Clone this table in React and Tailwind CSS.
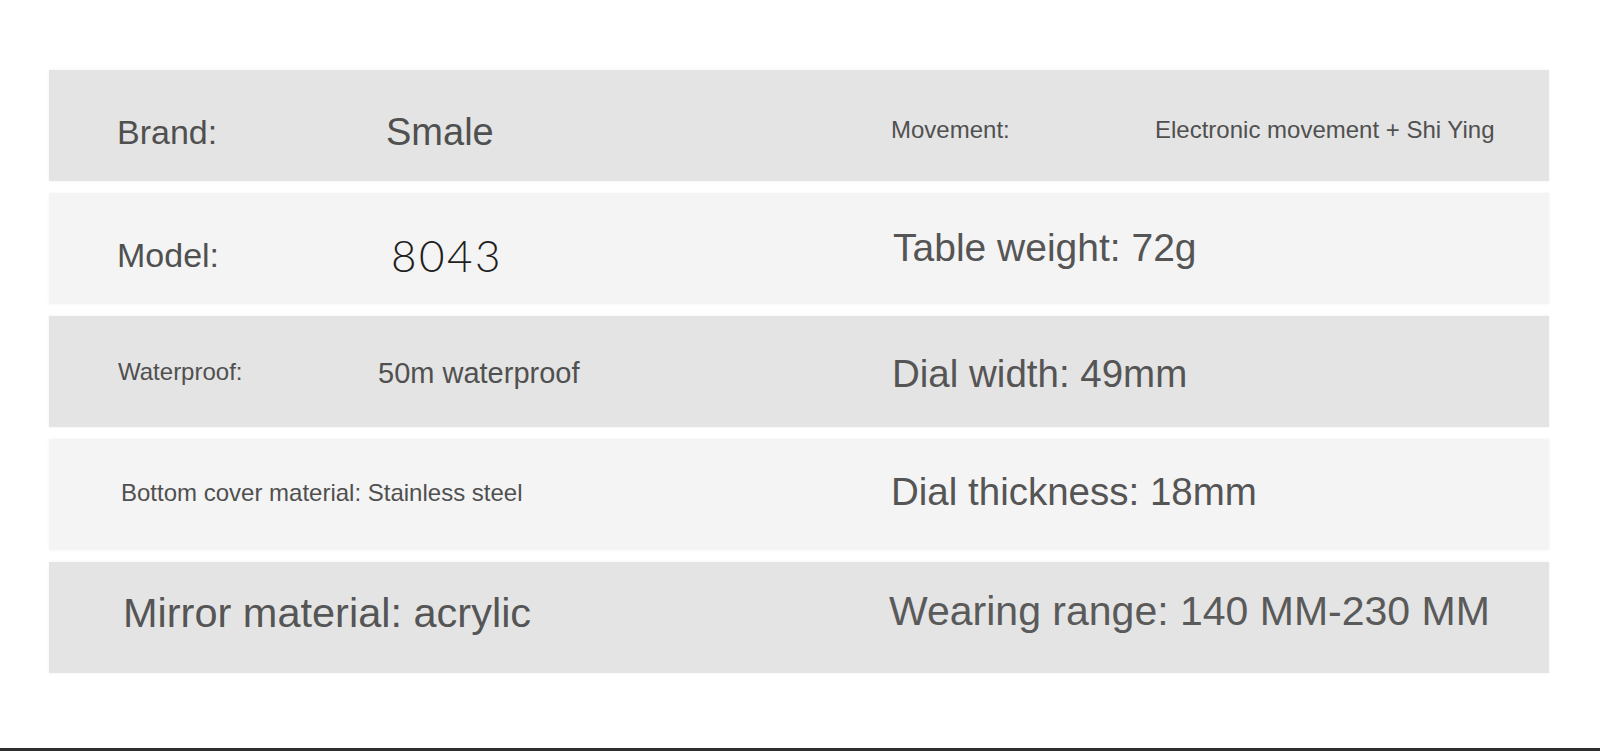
export default function App() {
  const font = { fontFamily: '"Liberation Sans", Arial, sans-serif' };

  return (
    <div className="w-[1600px] h-[751px] bg-white flex flex-col overflow-hidden" style={font}>
      <div className="flex-1 pt-[70px] pl-[49px]">
        <div className="w-[1500px] flex flex-col gap-[12px] text-[#505050] leading-none">
          {/* Brand / Movement */}
          <div className="h-[111px] bg-[#e4e4e4] shadow-[0_0_3px_rgba(0,0,0,0.06)] flex items-center">
            <div className="w-[842px] flex items-center">
              <span className="ml-[68px] w-[269px] text-[34px] mt-[13px]">Brand:</span>
              <span className="text-[38px] mt-[13px]">Smale</span>
            </div>
            <div className="flex items-center">
              <span className="w-[264px] text-[24px] mt-[8px]">Movement:</span>
              <span className="text-[24px] mt-[8px]">Electronic movement + Shi Ying</span>
            </div>
          </div>

          {/* Model / Table weight */}
          <div className="h-[111px] bg-[#f4f4f4] shadow-[0_0_3px_rgba(0,0,0,0.05)] flex items-center">
            <div className="w-[842px] flex items-center">
              <span className="ml-[68px] w-[274px] text-[34px] mt-[13px]">Model:</span>
              <span className="text-[44px] font-light tracking-[2.5px] mt-[13px] text-[#1f1f1f]" style={{ fontFamily: 'Lato, "Open Sans", sans-serif' }}>8043</span>
            </div>
            <span className="ml-[2px] text-[39px] mb-[3px] text-[#555]">Table weight: 72g</span>
          </div>

          {/* Waterproof / Dial width */}
          <div className="h-[111px] bg-[#e4e4e4] shadow-[0_0_3px_rgba(0,0,0,0.06)] flex items-center">
            <div className="w-[842px] flex items-center">
              <span className="ml-[69px] w-[260px] text-[24px]">Waterproof:</span>
              <span className="text-[29px] mt-[3px]">50m waterproof</span>
            </div>
            <span className="ml-[1px] text-[38.5px] mt-[5px] text-[#555]">Dial width: 49mm</span>
          </div>

          {/* Bottom cover / Dial thickness */}
          <div className="h-[111px] bg-[#f4f4f4] shadow-[0_0_3px_rgba(0,0,0,0.05)] flex items-center">
            <div className="w-[842px] flex items-center">
              <span className="ml-[72px] text-[24px] mb-[4px]">Bottom cover material: Stainless steel</span>
            </div>
            <span className="text-[38.5px] mb-[5px] text-[#555]">Dial thickness: 18mm</span>
          </div>

          {/* Mirror / Wearing range */}
          <div className="h-[111px] bg-[#e4e4e4] shadow-[0_0_3px_rgba(0,0,0,0.06)] flex items-center">
            <div className="w-[840px] flex items-center">
              <span className="ml-[74px] text-[41.5px] mb-[9px] text-[#555]">Mirror material: acrylic</span>
            </div>
            <span className="text-[41px] mb-[13px] text-[#5a5a5a]">Wearing range: 140 MM-230 MM</span>
          </div>
        </div>
      </div>
      <div className="h-[3px] bg-[#2e2e2e]" />
    </div>
  );
}
